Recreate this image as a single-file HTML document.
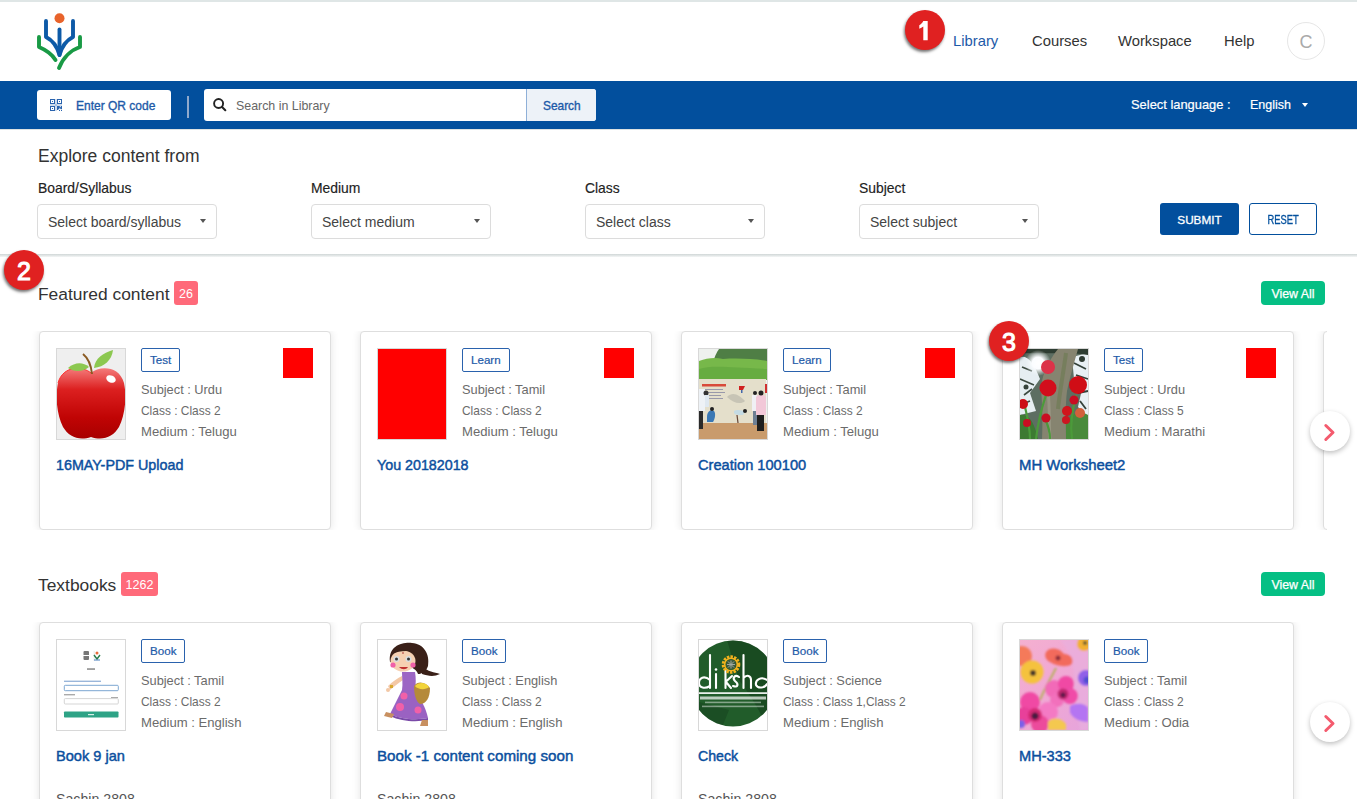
<!DOCTYPE html>
<html><head><meta charset="utf-8">
<style>
*{box-sizing:border-box;margin:0;padding:0}
html,body{width:1357px;height:799px;overflow:hidden;background:#fff;font-family:"Liberation Sans",sans-serif;color:#333}
.a{position:absolute;white-space:nowrap}
#topline{left:0;top:0;width:1357px;height:2px;background:#dfe6e6}
.nav{font-size:14.8px;color:#333;top:32px;line-height:18px}
#bar{left:0;top:81px;width:1357px;height:48px;background:#024f9d}
#barshadow{left:0;top:129px;width:1357px;height:1px;background:#dde2e2}
.btnqr{left:37px;top:90px;width:134px;height:30px;background:#fff;border-radius:3px}
.sep{left:187px;top:96px;width:2px;height:22px;background:#8fa9cc}
.search{left:204px;top:89px;width:392px;height:32px;background:#fff;border-radius:3px}
.searchbtn{left:526px;top:89px;width:70px;height:32px;background:#edf2f8;border-left:1px solid #8fb0d8;border-radius:0 3px 3px 0}
.white{color:#fff}
.lbl{font-size:13.9px;color:#222;-webkit-text-stroke:.15px #222;line-height:16px}
.sel{width:180px;height:35px;top:204px;border:1px solid #dcdcdc;border-radius:4px;background:#fff}
.seltxt{font-size:14px;color:#444;line-height:16px}
.caret{width:0;height:0;border-left:3px solid transparent;border-right:3px solid transparent;border-top:4px solid #555}
#filtshadow{left:0;top:254px;width:1357px;height:3px;background:linear-gradient(#cfd6d6,#f4f6f6)}
.badge{width:40px;height:40px;border-radius:50%;background:#e02121;box-shadow:-1px 2px 3px rgba(0,0,0,.55);color:#fff;font-weight:400;-webkit-text-stroke:1.1px #fff;font-size:25px;text-align:center;line-height:42px}
.sectitle{font-size:17.4px;color:#333;line-height:20px}
.cnt{height:24px;border-radius:3px;background:#ff6a7a;color:#fff;font-size:12.5px;text-align:center;line-height:26px}
.viewall{left:1261px;width:64px;height:24px;border-radius:4px;background:#05bf84;color:#fff;font-size:12.4px;-webkit-text-stroke:.25px #fff;line-height:26px;text-align:center}
.card{width:292px;height:199px;border:1px solid #dedede;border-radius:4px;background:#fff;box-shadow:0 0 9px rgba(0,0,0,.11)}
.card .img{position:absolute;left:16px;top:16px;width:70px;height:92px;border:1px solid #d8d8d8;overflow:hidden}
.card .tag{position:absolute;left:101px;top:16px;height:24px;border:1.5px solid #2a62ad;border-radius:2px;color:#1d5aa8;font-size:11.6px;font-weight:400;-webkit-text-stroke:.2px #1d5aa8;line-height:22px;padding:0 8px}
.card .red{position:absolute;left:243px;top:16px;width:30px;height:30px;background:#f00}
.card .meta{position:absolute;left:101px;font-size:12.95px;color:#6b6b6b;line-height:16px;white-space:nowrap}
.card .title{position:absolute;left:16px;top:124px;font-size:14.3px;font-weight:400;-webkit-text-stroke:.45px #0b4f9e;color:#0b4f9e;line-height:18px;white-space:nowrap}
.next{width:40px;height:40px;border-radius:50%;background:#fff;box-shadow:0 2px 5px rgba(0,0,0,.25)}
</style></head><body>
<div class="a" id="topline"></div>

<!-- logo -->
<svg class="a" style="left:30px;top:8px" width="60" height="66" viewBox="30 8 60 66">
  <circle cx="59.5" cy="18.2" r="5" fill="#e8632b"/>
  <g fill="none" stroke-linecap="round" stroke-linejoin="round" stroke-width="3.9">
    <path d="M46 21 V37 C52 40 57 46 59.5 55 C62 46 67 40 73 37 V21" stroke="#0d5aa7"/>
    <path d="M59.5 29.5 V55" stroke="#0d5aa7"/>
    <path d="M39 37 V47 C46 50 52 54 55.5 60" stroke="#199a45"/>
    <path d="M80 37 V47 C71 50 63 58 59 68" stroke="#199a45"/>
  </g>
</svg>

<div class="a nav" style="left:953px;color:#1d5aa8">Library</div>
<div class="a nav" style="left:1032px">Courses</div>
<div class="a nav" style="left:1118px">Workspace</div>
<div class="a nav" style="left:1224px">Help</div>
<div class="a" style="left:1287px;top:22px;width:38px;height:38px;border-radius:50%;border:1px solid #e6e6e6;color:#aaa;font-size:18px;text-align:center;line-height:38px">C</div>
<div class="a badge" style="left:905px;top:10px"><svg width="40" height="40" style="position:absolute;left:0;top:0"><path d="M18.3 11 H22.7 V30.2 H18.3 V16.6 C17 17.6 15.6 18.3 14.3 18.8 V15.2 C15.9 14.4 17.2 13 18.3 11Z" fill="#fff"/></svg></div>

<div class="a" id="bar"></div>
<div class="a" id="barshadow"></div>
<div class="a btnqr"></div>
<svg class="a" style="left:50px;top:99px" width="12" height="12" viewBox="0 0 12 12" fill="#2a63ae">
<path d="M0 0h5v5H0zM1 1v3h3V1z"/><rect x="2" y="2" width="1" height="1"/>
<path d="M7 0h5v5H7zM8 1v3h3V1z"/><rect x="9" y="2" width="1" height="1"/>
<path d="M0 7h5v5H0zM1 8v3h3V8z"/><rect x="2" y="9" width="1" height="1"/>
<path d="M7 7h1.2v4H7zM8.2 7h1.2l1.4 1.6V7H12v3.2H10.8L9.4 8.6V10.2H8.2z"/><rect x="9" y="11" width="1" height="1"/><rect x="11" y="11" width="1" height="1"/>
<rect x="5" y="0" width="2" height="12" fill-opacity=".22"/><rect x="0" y="5" width="12" height="2" fill-opacity=".22"/>
</svg>
<div class="a" style="left:76px;top:99px;font-size:12px;color:#1d5aa8;-webkit-text-stroke:.35px #1d5aa8;line-height:15px">Enter QR code</div>
<div class="a sep"></div>
<div class="a search"></div>
<div class="a searchbtn"></div>
<svg class="a" style="left:212px;top:97px" width="15" height="15" viewBox="0 0 15 15"><circle cx="6.6" cy="6.5" r="4.5" stroke="#222" stroke-width="1.9" fill="none"/><path d="M10 10 L13.3 13.2" stroke="#222" stroke-width="2.1" stroke-linecap="round"/></svg>
<div class="a" style="left:236px;top:99px;font-size:12.4px;color:#666;line-height:15px">Search in Library</div>
<div class="a" style="left:543px;top:99px;font-size:11.9px;color:#1d5aa8;-webkit-text-stroke:.35px #1d5aa8;line-height:15px">Search</div>
<div class="a white" style="left:1131px;top:97px;font-size:12.9px;-webkit-text-stroke:.2px #fff;line-height:15px">Select language :</div>
<div class="a white" style="left:1250px;top:98px;font-size:12.5px;-webkit-text-stroke:.2px #fff;line-height:15px">English</div>
<div class="a caret" style="left:1302px;top:103px;border-top-color:#fff"></div>

<div class="a" style="left:38px;top:146px;font-size:17.5px;color:#333;line-height:20px">Explore content from</div>
<div class="a lbl" style="left:38px;top:180px">Board/Syllabus</div>
<div class="a lbl" style="left:311px;top:180px">Medium</div>
<div class="a lbl" style="left:585px;top:180px">Class</div>
<div class="a lbl" style="left:859px;top:180px">Subject</div>
<div class="a sel" style="left:37px"></div>
<div class="a sel" style="left:311px"></div>
<div class="a sel" style="left:585px"></div>
<div class="a sel" style="left:859px"></div>
<div class="a seltxt" style="left:48px;top:214px">Select board/syllabus</div>
<div class="a seltxt" style="left:322px;top:214px">Select medium</div>
<div class="a seltxt" style="left:596px;top:214px">Select class</div>
<div class="a seltxt" style="left:870px;top:214px">Select subject</div>
<div class="a caret" style="left:200px;top:219px"></div>
<div class="a caret" style="left:474px;top:219px"></div>
<div class="a caret" style="left:748px;top:219px"></div>
<div class="a caret" style="left:1022px;top:219px"></div>
<div class="a" style="left:1160px;top:203px;width:79px;height:32px;background:#024f9d;border-radius:3px;color:#fff;font-size:11.75px;-webkit-text-stroke:.3px #fff;text-align:center;line-height:34px">SUBMIT</div>
<div class="a" style="left:1249px;top:203px;width:68px;height:32px;border:1.5px solid #024f9d;border-radius:3px;color:#024f9d;font-size:12px;-webkit-text-stroke:.3px #024f9d;text-align:center;line-height:33px"><span style="display:inline-block;transform:scaleX(.78)">RESET</span></div>
<div class="a" id="filtshadow"></div>

<!-- SECTIONS -->
<div class="a badge" style="left:4px;top:250px">2</div>
<div class="a sectitle" style="left:38px;top:284px">Featured content</div>
<div class="a cnt" style="left:174px;top:281px;width:24px">26</div>
<div class="a viewall" style="top:281px">View All</div>
<div class="a" style="left:0;top:331px;width:1327px;height:199px;overflow:hidden">
<div class="a card" style="left:39px;top:0px"><div class="img"><svg width="68" height="90" viewBox="0 0 68 90"><rect width="68" height="90" fill="#efefef"/>
<defs><linearGradient id="ag" x1="0" y1="0" x2="0" y2="1"><stop offset="0" stop-color="#f47a7a"/><stop offset="0.3" stop-color="#dc2020"/><stop offset="0.7" stop-color="#c00404"/><stop offset="1" stop-color="#a80000"/></linearGradient></defs>
<path d="M34 24 C26 17 6 16 1 34 C-2 48 0 66 6 78 C12 88 22 92 34 88 C46 92 56 88 62 78 C68 66 70 48 67 34 C62 16 42 17 34 24Z" fill="url(#ag)"/>
<path d="M34 24 C26 17 6 16 1 34" stroke="#ff3030" stroke-width="1" fill="none"/>
<ellipse cx="54" cy="30" rx="5" ry="3.5" fill="#fff" transform="rotate(25 54 30)"/>
<path d="M26 5 C31 9 34 15 35 25" stroke="#8a5a22" stroke-width="2" fill="none"/>
<path d="M37 19 C38 9 46 4 56 1 C55 11 47 18 37 19Z" fill="#8cc850"/>
<path d="M11 19 C18 13 26 13 32 18 C26 23 17 23 11 19Z" fill="#8cc850"/></svg></div><div class="tag">Test</div><div class="red"></div><div class="meta" style="top:50px;font-size:12.8px">Subject : Urdu</div><div class="meta" style="top:71.3px;font-size:11.95px">Class : Class 2</div><div class="meta" style="top:92px;font-size:13.1px">Medium : Telugu</div><div class="title" style="font-size:14.33px">16MAY-PDF Upload</div></div>
<div class="a card" style="left:360px;top:0px"><div class="img"><svg width="68" height="90"><rect width="68" height="90" fill="#ff0000"/></svg></div><div class="tag">Learn</div><div class="red"></div><div class="meta" style="top:50px;font-size:12.8px">Subject : Tamil</div><div class="meta" style="top:71.3px;font-size:11.95px">Class : Class 2</div><div class="meta" style="top:92px;font-size:13.1px">Medium : Telugu</div><div class="title" style="font-size:14.28px">You 20182018</div></div>
<div class="a card" style="left:681px;top:0px"><div class="img"><svg width="68" height="90" viewBox="0 0 68 90"><rect width="68" height="90" fill="#eef1ee"/>
<path d="M20 0 H68 V14 H14 C16 6 18 3 20 0Z" fill="#4f7e45"/>
<path d="M0 12 C8 9 16 8 24 10 C40 9 56 10 68 12 V31 H0Z" fill="#77b84a"/>
<path d="M0 20 C12 16 30 18 68 20 V31 H0Z" fill="#5ea43c" opacity=".6"/>
<path d="M0 30 H67 V74 H0Z" fill="#e4dfcb"/>
<path d="M0 74 H68 V90 H0Z" fill="#c99b6c"/>
<rect x="3" y="35" width="24" height="2.5" fill="#d84a3a"/>
<rect x="4" y="40" width="20" height="1" fill="#99a"/><rect x="4" y="43" width="22" height="1" fill="#99a"/><rect x="4" y="46" width="18" height="1" fill="#99a"/><rect x="4" y="49" width="20" height="1" fill="#99a"/>
<path d="M40 37 L46 37 L44 41 L40 41Z" fill="#d02020"/><rect x="42" y="41" width="1.5" height="3" fill="#4466aa"/>
<path d="M28 48 C34 42 40 46 46 52 C42 56 34 54 28 48Z" fill="#a9a9a0" opacity=".5"/>
<rect x="0" y="40" width="6" height="22" fill="#eef2f6"/><rect x="0" y="62" width="4" height="18" fill="#2a2a2a"/><circle cx="7" cy="44" r="2.5" fill="#333"/><rect x="6" y="46" width="4" height="12" fill="#dfe8f0"/>
<path d="M8 68 C8 62 12 60 15 62 C17 64 16 70 14 73 L8 73Z" fill="#3b78b4"/><circle cx="13" cy="60" r="2" fill="#222"/>
<path d="M35 62 C38 60 44 61 46 63 L44 66 C40 66 36 66 35 64Z" fill="#c4dbe4"/><circle cx="46" cy="62" r="2" fill="#222"/><path d="M38 66 L39 74" stroke="#6a4a3a" stroke-width="1.2"/>
<rect x="53" y="46" width="5" height="16" fill="#f0f0f4"/><rect x="54" y="62" width="4" height="14" fill="#6d7f94"/><circle cx="56" cy="44" r="2" fill="#222"/>
<path d="M57 48 C59 45 65 45 67 48 V66 H57Z" fill="#f2c8d8"/><rect x="58" y="66" width="7" height="16" fill="#1e1e1e"/><circle cx="62" cy="44" r="2.5" fill="#222"/>
<rect x="66" y="35" width="2" height="9" fill="#d03030"/></svg></div><div class="tag">Learn</div><div class="red"></div><div class="meta" style="top:50px;font-size:12.8px">Subject : Tamil</div><div class="meta" style="top:71.3px;font-size:11.95px">Class : Class 2</div><div class="meta" style="top:92px;font-size:13.1px">Medium : Telugu</div><div class="title" style="font-size:14.63px">Creation 100100</div></div>
<div class="a card" style="left:1002px;top:0px"><div class="img"><svg width="68" height="90" viewBox="0 0 68 90">
<defs><radialGradient id="sun" cx="18" cy="14" r="13" gradientUnits="userSpaceOnUse"><stop offset="0" stop-color="#fff"/><stop offset=".45" stop-color="#fbfdff"/><stop offset="1" stop-color="#eef4f6" stop-opacity="0"/></radialGradient>
<filter id="tbl" x="-5%" y="-5%" width="110%" height="110%"><feGaussianBlur stdDeviation=".45"/></filter></defs>
<rect width="68" height="90" fill="#5d6e62"/>
<g filter="url(#tbl)">
<path d="M0 8 C8 6 14 14 20 30 L10 44 L16 62 L0 66Z" fill="#e6eef2"/>
<path d="M2 18 L12 22 M0 30 L14 36 M4 46 L12 40 M0 56 L10 52" stroke="#3c4a40" stroke-width="1.6"/>
<path d="M52 8 L68 4 V68 L58 58 L62 40 L54 30Z" fill="#e8f0f4"/>
<path d="M54 14 L66 20 M56 26 L68 30 M58 44 L68 42 M60 52 L66 60" stroke="#34423a" stroke-width="1.8"/>
<circle cx="62" cy="10" r="3" fill="#2e3a32"/><circle cx="6" cy="38" r="2.5" fill="#34423a"/>
<path d="M0 0 H68 V6 C50 3 30 5 0 4Z" fill="#2f3d30"/>
<circle cx="18" cy="14" r="13" fill="url(#sun)"/>
<path d="M38 0 H58 C54 14 50 28 47 42 C45 58 46 76 46 90 H22 C23 72 22 52 21 38 C23 22 30 10 38 0Z" fill="#86846f"/>
<path d="M46 4 C44 20 40 40 38 60" stroke="#6d7a52" stroke-width="4" fill="none" opacity=".6"/>
<path d="M28 40 C30 60 29 80 30 90" stroke="#a8a696" stroke-width="3" fill="none" opacity=".5"/>
<path d="M0 66 C8 64 14 72 18 90 H0Z" fill="#3c7a32"/><path d="M46 72 C54 62 62 62 68 66 V90 H46Z" fill="#4a8a3a"/>
<path d="M16 90 C18 72 22 58 26 46 M52 90 C50 76 52 64 56 46 M10 90 C10 80 8 70 5 58 M30 90 C30 80 27 74 25 70" stroke="#4c9a3a" stroke-width="2.2" fill="none"/>
<circle cx="28" cy="18" r="7" fill="#dc3048"/><circle cx="28" cy="39" r="8.5" fill="#d20e1a"/>
<circle cx="58" cy="36" r="9" fill="#d00c16"/><circle cx="3" cy="55" r="5" fill="#cc1018"/>
<circle cx="54" cy="51" r="4.5" fill="#c81020"/><circle cx="47" cy="62" r="5" fill="#d0121c"/><circle cx="46" cy="71" r="4" fill="#cc1420"/>
<circle cx="60" cy="64" r="5" fill="#d2603a"/><circle cx="26" cy="69" r="4.5" fill="#c81020"/>
<circle cx="7" cy="74" r="4" fill="#c81020"/></g></svg></div><div class="tag">Test</div><div class="red"></div><div class="meta" style="top:50px;font-size:12.8px">Subject : Urdu</div><div class="meta" style="top:71.3px;font-size:11.95px">Class : Class 5</div><div class="meta" style="top:92px;font-size:13.1px">Medium : Marathi</div><div class="title" style="font-size:14.89px">MH Worksheet2</div></div>
<div class="a card" style="left:1323px;top:0px"></div>
</div>
<div class="a next" style="left:1310px;top:411px"><svg width="40" height="40"><path d="M15.8 14.5 L23 21.5 L15.8 28.5" stroke="#f45b6e" stroke-width="3" fill="none" stroke-linecap="round" stroke-linejoin="round"/></svg></div>
<div class="a badge" style="left:989px;top:321px">3</div>
<div class="a sectitle" style="left:38px;top:575px">Textbooks</div>
<div class="a cnt" style="left:121px;top:572px;width:37px">1262</div>
<div class="a viewall" style="top:572px">View All</div>
<div class="a" style="left:0;top:622px;width:1357px;height:177px;overflow:hidden">
<div class="a card" style="left:39px;top:0px"><div class="img"><svg width="68" height="90" viewBox="0 0 68 90"><rect width="68" height="90" fill="#fff"/>
<rect x="26.5" y="11" width="5.5" height="9" rx="1" fill="#777"/><rect x="26" y="15" width="6.5" height="1" fill="#fff"/>
<rect x="36.8" y="11" width=".6" height="10" fill="#ddd"/>
<circle cx="40" cy="13" r="1.5" fill="#e86a3a"/><path d="M37 15 L40 19 L43 15" stroke="#2a7a4a" stroke-width="1.4" fill="none"/><rect x="37" y="19.5" width="6" height="1" fill="#4a80c0"/>
<rect x="30" y="28.3" width="8" height="1.5" fill="#888"/>
<rect x="7" y="40.6" width="37" height="1.4" fill="#9ab6da"/>
<rect x="7.3" y="45.3" width="54" height="5.4" rx="1" fill="#fff" stroke="#6d9ccc" stroke-width=".9"/>
<rect x="7" y="54" width="11" height="1.4" fill="#aaa"/><rect x="54" y="57" width="7" height="1" fill="#aaa"/>
<rect x="7.3" y="58.6" width="54" height="5.4" rx="1" fill="#fff" stroke="#d0d0d0" stroke-width=".9"/>
<rect x="7" y="71.5" width="54.5" height="6" rx=".8" fill="#2ea386"/><rect x="31" y="74" width="6" height="1.2" fill="#d8f0e8"/></svg></div><div class="tag">Book</div><div class="meta" style="top:50px;font-size:12.8px">Subject : Tamil</div><div class="meta" style="top:71.3px;font-size:11.95px">Class : Class 2</div><div class="meta" style="top:92px;font-size:13.1px">Medium : English</div><div class="title" style="font-size:14.6px">Book 9 jan</div><div class="meta" style="left:16px;top:168px;color:#555;font-size:14.2px">Sachin 2808</div></div>
<div class="a card" style="left:360px;top:0px"><div class="img"><svg width="68" height="90" viewBox="0 0 68 90"><rect width="68" height="90" fill="#fff"/>
<path d="M44 26 C50 32 56 32 62 34 C56 37 50 36 44 34Z" fill="#3a2018"/>
<path d="M12 22 C10 6 24 2 34 3 C46 4 52 14 50 26 C48 32 44 34 40 34 C38 26 22 24 12 22Z" fill="#3a2018"/>
<ellipse cx="25" cy="21" rx="12.5" ry="10.5" fill="#f6d0b2"/>
<path d="M14 14 C20 8 32 8 40 14 C34 10 22 10 14 14Z" fill="#3a2018"/>
<circle cx="18.5" cy="19" r="3" fill="#d8dde0"/><circle cx="30.5" cy="19" r="3" fill="#d8dde0"/>
<circle cx="18.5" cy="19" r="1.5" fill="#333"/><circle cx="30.5" cy="19" r="1.5" fill="#333"/>
<circle cx="15" cy="25" r="2.6" fill="#f060a8"/><circle cx="35" cy="25" r="2.6" fill="#f060a8"/>
<path d="M21 27 C24 30 28 30 30 27Z" fill="#c03030"/><circle cx="25" cy="13" r=".8" fill="#a02020"/>
<path d="M10 46 C14 42 20 38 24 36 L25 40 C20 43 16 47 12 50Z" fill="#f3c8a6"/>
<circle cx="10" cy="50" r="2" fill="#f3c8a6"/><rect x="12" y="45" width="3" height="3" fill="#d8a830"/>
<path d="M24 32 L37 32 C38 38 38 44 37 50 L24 50 C25 44 24 38 24 32Z" fill="#9c66c4"/>
<path d="M24 50 L37 50 C42 58 48 68 50 78 C40 80 24 80 12 74 C16 66 20 58 24 50Z" fill="#9a62c2"/>
<path d="M12 74 C24 80 40 80 50 78 L50 80 C40 82 24 82 12 76Z" fill="#7a4aa8"/>
<circle cx="26" cy="56" r="3.5" fill="#f060a8"/><circle cx="22" cy="67" r="4" fill="#f060a8"/><circle cx="40" cy="70" r="3.5" fill="#f060a8"/>
<path d="M36 46 C40 40 48 42 52 48 C52 58 48 64 42 64 C38 62 36 54 36 46Z" fill="#b58a3a"/>
<path d="M37 46 C40 42 48 42 51 47 C48 50 40 50 37 46Z" fill="#f2d43a"/>
<path d="M8 72 L16 74 L14 78 L6 76Z" fill="#c89060"/><path d="M44 80 L50 80 L50 86 L42 86Z" fill="#c89060"/></svg></div><div class="tag">Book</div><div class="meta" style="top:50px;font-size:12.8px">Subject : English</div><div class="meta" style="top:71.3px;font-size:11.95px">Class : Class 2</div><div class="meta" style="top:92px;font-size:13.1px">Medium : English</div><div class="title" style="font-size:15.17px">Book -1 content coming soon</div><div class="meta" style="left:16px;top:168px;color:#555;font-size:14.2px">Sachin 2808</div></div>
<div class="a card" style="left:681px;top:0px"><div class="img"><svg width="68" height="90" viewBox="0 0 68 90"><rect width="68" height="90" fill="#fff"/>
<defs><clipPath id="dc"><circle cx="34" cy="43.5" r="43"/></clipPath></defs>
<circle cx="34" cy="43.5" r="43" fill="#215c2a"/>
<g clip-path="url(#dc)"><path d="M28 0 L68 0 V86 C60 70 52 56 40 40Z" fill="#123a18" opacity=".5"/>
<path d="M0 62 L30 70 L22 90 L0 90Z" fill="#153f1c" opacity=".45"/></g>
<g stroke="#fff" stroke-width="2.1" fill="none" stroke-linecap="round">
<path d="M11 15 V48"/><path d="M11 40 C5 35 0 38 0 43 C0 48 6 49 11 46"/>
<path d="M17 34 V48"/><path d="M26.5 30 V48 M26.5 42 L33 36 M27 42 L32 48"/>
<path d="M44.5 15 V48 M44.5 38 C48 34 52 36 52 40 V48"/><path d="M40 37 C36 34 33 38 36 41 C40 44 39 48 34 46"/>
<path d="M68 40 C62 36 56 40 57 45 C59 49 66 48 68 44"/>
</g>
<circle cx="17" cy="29.5" r="1.3" fill="#fff"/>
<circle cx="32" cy="24.5" r="7.8" fill="none" stroke="#f2b21e" stroke-width="3" stroke-dasharray="2.4 1.2"/><circle cx="32" cy="24.5" r="6.3" fill="none" stroke="#f2b21e" stroke-width="1.6"/>
<circle cx="32" cy="24.5" r="5" fill="#3d5a3d"/><path d="M28 24.5 H36 M32 20.5 V28.5 M29 21.5 L35 27.5 M35 21.5 L29 27.5" stroke="#a0a8a0" stroke-width="1"/>
<rect x="0" y="52.3" width="68" height="1.6" fill="#fff"/>
<rect x="1" y="56.5" width="66" height="3" fill="#fff" opacity=".7"/>
<rect x="6" y="61.6" width="56" height="1.6" fill="#fff" opacity=".45"/><rect x="3" y="65.6" width="62" height="1.6" fill="#fff" opacity=".45"/></svg></div><div class="tag">Book</div><div class="meta" style="top:50px;font-size:12.8px">Subject : Science</div><div class="meta" style="top:71.3px;font-size:11.95px">Class : Class 1,Class 2</div><div class="meta" style="top:92px;font-size:13.1px">Medium : English</div><div class="title" style="font-size:14.11px">Check</div><div class="meta" style="left:16px;top:168px;color:#555;font-size:14.2px">Sachin 2808</div></div>
<div class="a card" style="left:1002px;top:0px"><div class="img"><svg width="68" height="90" viewBox="0 0 68 90">
<defs><linearGradient id="fb" x1="0" y1="0" x2="1" y2="1"><stop offset="0" stop-color="#f4b0d0"/><stop offset=".5" stop-color="#f0a8d4"/><stop offset="1" stop-color="#e6a4dc"/></linearGradient>
<filter id="fbl" x="-10%" y="-10%" width="120%" height="120%"><feGaussianBlur stdDeviation=".8"/></filter></defs>
<rect width="68" height="90" fill="url(#fb)"/>
<g filter="url(#fbl)">
<path d="M40 0 C50 10 56 30 54 50 L60 90 H68 V0Z" fill="#e8b0e0" opacity=".6"/>
<path d="M20 60 C24 50 30 40 36 28" stroke="#b8b060" stroke-width="2" fill="none"/>
<circle cx="2" cy="16" r="10" fill="#f47a5a"/>
<path d="M26 12 C30 6 40 8 44 14 C50 14 54 18 52 24 C46 28 36 26 30 22 C26 20 24 16 26 12Z" fill="#f26a5c"/><circle cx="38" cy="18" r="2.5" fill="#8a2a3a"/>
<circle cx="12" cy="32" r="11.5" fill="#f5c23e"/><circle cx="13" cy="33" r="3" fill="#4a3a2a"/>
<circle cx="64" cy="4" r="7" fill="#f2b030"/><circle cx="65" cy="3" r="2" fill="#553"/>
<circle cx="66" cy="38" r="8" fill="#9060e8"/><circle cx="67" cy="40" r="3.5" fill="#5050d0"/>
<circle cx="34" cy="49" r="9" fill="#f26ab8"/><circle cx="46" cy="44" r="8" fill="#f04aa4"/><circle cx="50" cy="56" r="8" fill="#f04ca8"/><circle cx="37" cy="60" r="7" fill="#f270bc"/>
<circle cx="43" cy="54" r="5.5" fill="#c02870"/><circle cx="43" cy="55" r="2.5" fill="#5a1a48"/>
<circle cx="10" cy="62" r="10" fill="#f04aa4"/><circle cx="28" cy="72" r="10" fill="#f47ac4"/><circle cx="4" cy="76" r="9" fill="#e8409a"/><circle cx="20" cy="84" r="9" fill="#ec4c9c"/>
<circle cx="15" cy="75" r="7" fill="#d42a74"/><circle cx="15" cy="76" r="3.5" fill="#4a1a40"/>
<path d="M28 82 C32 76 42 78 46 84 L46 90 H28Z" fill="#f4c850"/>
<path d="M50 66 C58 62 66 64 68 68 V82 C60 82 52 78 50 72Z" fill="#b474f2"/>
<circle cx="1" cy="84" r="4" fill="#7a60e8"/></g></svg></div><div class="tag">Book</div><div class="meta" style="top:50px;font-size:12.8px">Subject : Tamil</div><div class="meta" style="top:71.3px;font-size:11.95px">Class : Class 2</div><div class="meta" style="top:92px;font-size:13.1px">Medium : Odia</div><div class="title" style="font-size:14.62px">MH-333</div></div>
</div>
<div class="a next" style="left:1310px;top:702px"><svg width="40" height="40"><path d="M15.8 14.5 L23 21.5 L15.8 28.5" stroke="#f45b6e" stroke-width="3" fill="none" stroke-linecap="round" stroke-linejoin="round"/></svg></div>
</body></html>
